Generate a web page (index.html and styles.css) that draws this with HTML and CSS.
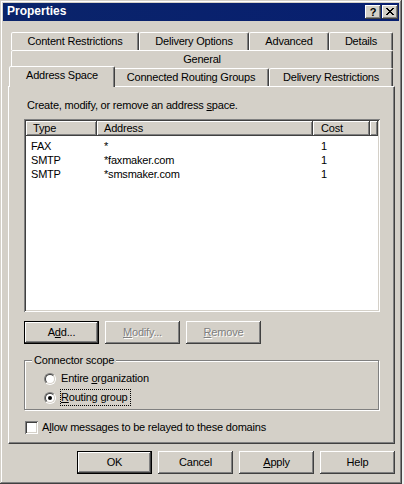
FILE: index.html
```html
<!DOCTYPE html>
<html>
<head>
<meta charset="utf-8">
<link rel="stylesheet" href="styles.css">
</head>
<body>
<div class="window">
  <div class="titlebar">
    <span class="title">Properties</span>
    <div class="caption-btns">
      <span class="cap-btn help">?</span>
      <span class="cap-btn close">
        <svg width="8" height="7" viewBox="0 0 8 7" shape-rendering="crispEdges"><path d="M0 0h2v1h-2zM6 0h2v1h-2zM1 1h2v1h-2zM5 1h2v1h-2zM2 2h4v1h-4zM3 3h2v1h-2zM2 4h4v1h-4zM1 5h2v1h-2zM5 5h2v1h-2zM0 6h2v1h-2zM6 6h2v1h-2z" fill="#000"/></svg>
      </span>
    </div>
  </div>
  <div class="client">
    <div class="tabs">
      <div class="tab-row">
        <div class="tab t-content">Content Restrictions</div>
        <div class="tab t-delivery-opt">Delivery Options</div>
        <div class="tab t-advanced">Advanced</div>
        <div class="tab t-details">Details</div>
      </div>
      <div class="tab-row">
        <div class="tab t-general">General</div>
      </div>
      <div class="tab-row">
        <div class="tab t-address selected">Address Space</div>
        <div class="tab t-connected">Connected Routing Groups</div>
        <div class="tab t-delivery-restr">Delivery Restrictions</div>
      </div>
    </div>
    <div class="panel">
      <p class="intro">Create, modify, or remove an address <u>s</u>pace.</p>
      <div class="listview">
        <div class="lv-header">
          <span>Type</span><span>Address</span><span>Cost</span><span></span>
        </div>
        <div class="lv-body">
          <div class="lv-row"><span>FAX</span><span>*</span><span>1</span></div>
          <div class="lv-row"><span>SMTP</span><span>*faxmaker.com</span><span>1</span></div>
          <div class="lv-row"><span>SMTP</span><span>*smsmaker.com</span><span>1</span></div>
        </div>
      </div>
      <div class="btn-row">
        <span class="btn default">A<u>d</u>d...</span>
        <span class="btn disabled"><u>M</u>odify...</span>
        <span class="btn disabled"><u>R</u>emove</span>
      </div>
      <div class="group">
        <span class="legend">Connector scope</span>
        <div class="radio-row">
          <span class="radio"><span class="radio-inner"></span></span>
          <span class="radio-label">Entire <u>o</u>rganization</span>
        </div>
        <div class="radio-row">
          <span class="radio checked"><span class="radio-inner"></span></span>
          <span class="radio-label focus"><u>R</u>outing group</span>
        </div>
      </div>
      <div class="check-row">
        <span class="checkbox"></span>
        <span>A<u>l</u>low messages to be relayed to these domains</span>
      </div>
    </div>
    <div class="dialog-btns">
      <span class="btn default">OK</span>
      <span class="btn">Cancel</span>
      <span class="btn"><u>A</u>pply</span>
      <span class="btn">Help</span>
    </div>
  </div>
</div>
</body>
</html>
```

FILE: styles.css
```css
* {
  box-sizing: border-box;
  margin: 0;
  padding: 0;
}

body {
  margin: 0;
  background: #f0f0f0;
  font-family: "Liberation Sans", Arial, sans-serif;
  font-size: 11px;
  line-height: 13px;
  letter-spacing: -0.2px;
  color: #000;
}

u {
  text-decoration: underline;
  text-underline-offset: 1px;
}

.window {
  width: 402px;
  height: 484px;
  background: #d4d0c8;
  padding: 3px;
  display: flex;
  flex-direction: column;
  box-shadow: inset -1px -1px #404040, inset 1px 1px #d4d0c8, inset -2px -2px #808080, inset 2px 2px #fff;
}

.titlebar {
  height: 18px;
  flex: none;
  background: linear-gradient(90deg, #0a246a, #081f70);
  display: flex;
  align-items: flex-start;
  padding-left: 4px;
  padding-right: 1px;
}

.title {
  color: #fff;
  font-weight: bold;
  font-size: 12px;
  line-height: 16px;
  letter-spacing: 0;
}

.caption-btns {
  margin-left: auto;
  margin-top: 2px;
  display: flex;
  gap: 1px;
}

.cap-btn {
  width: 16px;
  height: 14px;
  background: #d4d0c8;
  display: flex;
  align-items: center;
  justify-content: center;
  box-shadow: inset -1px -1px #404040, inset 1px 1px #fff, inset -2px -2px #808080, inset 2px 2px #d4d0c8;
}

.help {
  font-weight: bold;
  font-size: 11px;
  line-height: 14px;
  letter-spacing: 0;
  padding-bottom: 1px;
}

.close svg {
  display: block;
  margin-top: -1px;
}

.client {
  flex: 1;
  display: flex;
  flex-direction: column;
  padding: 11px 4px 7px 5px;
}

.tabs {
  margin-left: 3px;
  width: 382px;
}

.tab-row {
  display: flex;
  height: 18px;
  align-items: flex-end;
}

.tab {
  flex: none;
  height: 18px;
  background: #d4d0c8;
  border: 1px solid;
  border-bottom: 0;
  border-color: #fff #404040 transparent #fff;
  border-radius: 2px 2px 0 0;
  box-shadow: inset -1px 0 #808080;
  text-align: center;
  line-height: 16px;
  white-space: nowrap;
}

.t-content { width: 128px; }
.t-delivery-opt { width: 110px; }
.t-advanced { width: 80px; }
.t-details { width: 64px; }
.t-general { flex: 1; }
.t-connected { width: 156px; }
.t-delivery-restr { width: 124px; }

.t-address {
  width: 106px;
}

.tab.selected {
  height: 21px;
  margin: 0 -2px -1px -2px;
  position: relative;
  z-index: 1;
}

.panel {
  width: 387px;
  height: 358px;
  flex: none;
  border: 1px solid;
  border-color: #fff #404040 #404040 #fff;
  box-shadow: inset -1px -1px #808080;
  padding: 12px 0 0 15px;
}

.intro {
  padding-left: 3px;
  line-height: 13px;
}

.listview {
  margin-top: 7px;
  width: 356px;
  height: 193px;
  background: #fff;
  padding: 2px;
  box-shadow: inset 1px 1px #808080, inset -1px -1px #fff, inset 2px 2px #404040, inset -2px -2px #d4d0c8;
}

.lv-header {
  display: grid;
  grid-template-columns: 71px 216px 57px 8px;
  height: 15px;
}

.lv-header span {
  background: #d4d0c8;
  box-shadow: inset -1px -1px #404040, inset 1px 1px #fff, inset -2px -2px #808080;
  line-height: 14px;
  padding-left: 7px;
}

.lv-header span:nth-child(3) {
  padding-left: 8px;
}

.lv-body {
  padding-top: 3px;
}

.lv-row {
  display: grid;
  grid-template-columns: 71px 216px 57px;
  line-height: 14px;
}

.lv-row span {
  padding-left: 7px;
}

.lv-row span:first-child {
  padding-left: 5px;
}

.lv-row span:nth-child(3) {
  padding-left: 8px;
}

.btn-row {
  display: flex;
  gap: 6px;
  margin-top: 9px;
}

.btn {
  width: 75px;
  height: 23px;
  flex: none;
  background: #d4d0c8;
  text-align: center;
  line-height: 22px;
  box-shadow: inset -1px -1px #404040, inset 1px 1px #fff, inset -2px -2px #808080, inset 2px 2px #d4d0c8;
}

.btn.default {
  box-shadow: inset 0 0 0 1px #000, inset -2px -2px #404040, inset 2px 2px #fff, inset -3px -3px #808080;
}

.btn.disabled {
  color: #808080;
  text-shadow: 1px 1px 0 #fff;
}

.group {
  margin-top: 16px;
  width: 355px;
  height: 50px;
  border: 1px solid #808080;
  box-shadow: 1px 1px 0 #fff, inset 1px 1px 0 #fff;
  display: flex;
  flex-direction: column;
}

.legend {
  align-self: flex-start;
  margin: -7px 0 0 7px;
  padding: 0 2px;
  background: #d4d0c8;
  line-height: 13px;
}

.radio-row {
  display: flex;
  align-items: center;
  height: 19px;
  padding-left: 19px;
}

.legend + .radio-row {
  margin-top: 2px;
}

.radio {
  width: 12px;
  height: 12px;
  flex: none;
  border-radius: 50%;
  border: 1px solid;
  border-color: #808080 #fff #fff #808080;
  display: flex;
  align-items: center;
  justify-content: center;
  margin-right: 5px;
}

.radio-inner {
  width: 10px;
  height: 10px;
  border-radius: 50%;
  border: 1px solid;
  border-color: #404040 #d4d0c8 #d4d0c8 #404040;
  background: #fff;
  display: flex;
  align-items: center;
  justify-content: center;
}

.radio.checked .radio-inner::after {
  content: "";
  width: 4px;
  height: 4px;
  border-radius: 50%;
  background: #000;
}

.radio-label.focus {
  margin-left: -1px;
  border: 1px dotted #000;
  padding: 1px 2px 1px 0;
  line-height: 13px;
}

.check-row {
  display: flex;
  align-items: center;
  gap: 4px;
  margin-top: 11px;
  margin-left: 1px;
  height: 13px;
}

.checkbox {
  width: 13px;
  height: 13px;
  flex: none;
  background: #fff;
  box-shadow: inset 1px 1px #808080, inset -1px -1px #fff, inset 2px 2px #404040, inset -2px -2px #d4d0c8;
}

.dialog-btns {
  display: flex;
  justify-content: flex-end;
  gap: 6px;
  margin-top: 7px;
}
```
